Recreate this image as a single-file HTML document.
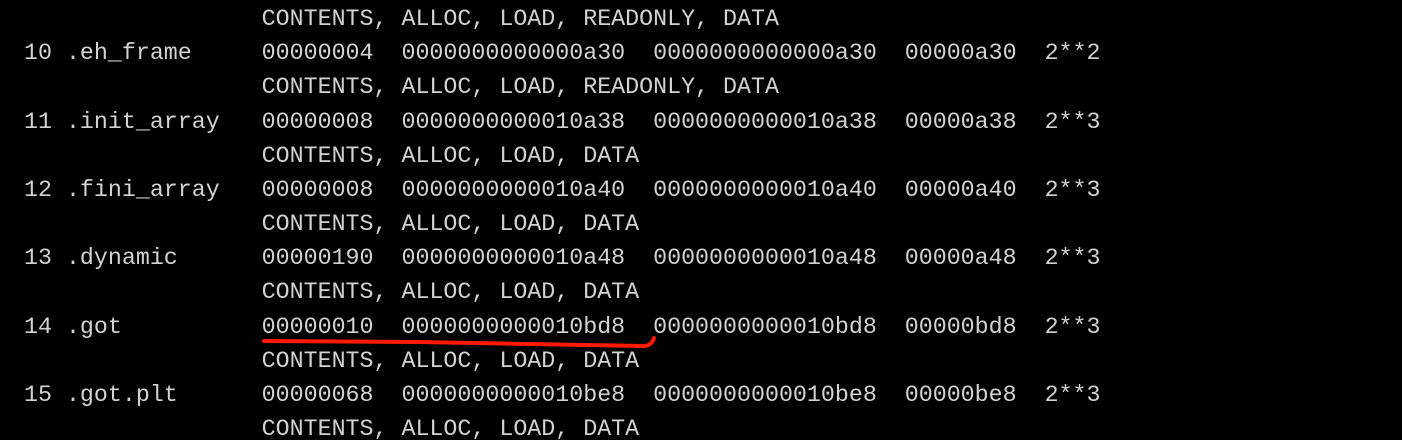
<html><head><style>
html,body{margin:0;background:#000;width:1402px;height:440px;overflow:hidden;position:relative}
pre{position:absolute;left:24px;top:2px;margin:0;font-family:"Liberation Mono",monospace;font-size:23.3px;line-height:34.17px;color:#d2d2d2}
svg{position:absolute;left:0;top:0}
</style></head><body>
<pre>                 CONTENTS, ALLOC, LOAD, READONLY, DATA
10 .eh_frame     00000004  0000000000000a30  0000000000000a30  00000a30  2**2
                 CONTENTS, ALLOC, LOAD, READONLY, DATA
11 .init_array   00000008  0000000000010a38  0000000000010a38  00000a38  2**3
                 CONTENTS, ALLOC, LOAD, DATA
12 .fini_array   00000008  0000000000010a40  0000000000010a40  00000a40  2**3
                 CONTENTS, ALLOC, LOAD, DATA
13 .dynamic      00000190  0000000000010a48  0000000000010a48  00000a48  2**3
                 CONTENTS, ALLOC, LOAD, DATA
14 .got          00000010  0000000000010bd8  0000000000010bd8  00000bd8  2**3
                 CONTENTS, ALLOC, LOAD, DATA
15 .got.plt      00000068  0000000000010be8  0000000000010be8  00000be8  2**3
                 CONTENTS, ALLOC, LOAD, DATA</pre>
<svg width="1402" height="440"><path d="M264 341 L420 342 L645 346 Q652 345 654 338" fill="none" stroke="#ff1a00" stroke-width="4" stroke-linecap="round"/></svg>
</body></html>
